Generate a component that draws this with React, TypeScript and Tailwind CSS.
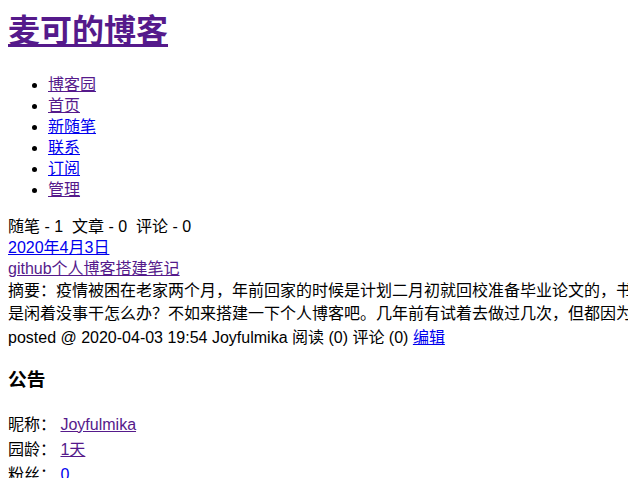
const visited = "text-[#551a8b] underline";
const link = "text-[#0000ee] underline";

const navItems = [
  { label: "博客园", seen: true },
  { label: "首页", seen: true },
  { label: "新随笔", seen: false },
  { label: "联系", seen: false },
  { label: "订阅", seen: false },
  { label: "管理", seen: true },
];

export default function App() {
  return (
    <div className="h-screen w-full overflow-hidden bg-white px-2 text-[16px] text-black font-['Liberation_Sans','Noto_Sans_CJK_SC',sans-serif]">
      <h1 className="mt-3 text-[32px] font-bold leading-[38px]">
        <a href="#" className={visited}>
          麦可的博客
        </a>
      </h1>

      <ul className="mt-6 list-disc pl-10 leading-[21px]">
        {navItems.map((item) => (
          <li key={item.label}>
            <a href="#" className={item.seen ? visited : link}>
              {item.label}
            </a>
          </li>
        ))}
      </ul>

      <div className="mt-4 leading-[21px]">
        <div>随笔 - 1&nbsp; 文章 - 0&nbsp; 评论 - 0</div>
        <div>
          <a href="#" className={link}>
            2020年4月3日
          </a>
        </div>
        <div>
          <a href="#" className={visited}>
            github个人博客搭建笔记
          </a>
        </div>
      </div>

      <div className="whitespace-nowrap leading-[23px]">
        摘要：疫情被困在老家两个月，年前回家的时候是计划二月初就回校准备毕业论文的，书和电脑都没带回来，于是每天都不知道干什么。那么问题来了，
        <br />
        是闲着没事干怎么办？不如来搭建一下个人博客吧。几年前有试着去做过几次，但都因为各种原因半途而废了，这次下定决心要搞定它。
      </div>

      <div className="leading-[25px]">
        posted @ 2020-04-03 19:54 Joyfulmika 阅读 (0) 评论 (0){" "}
        <a href="#" className={link}>
          编辑
        </a>
      </div>

      <h3 className="mt-[18px] text-[18.72px] font-bold leading-[24px]">公告</h3>

      <div className="mt-5 leading-[25px]">
        <div>
          昵称：{" "}
          <a href="#" className={visited}>
            Joyfulmika
          </a>
        </div>
        <div>
          园龄：{" "}
          <a href="#" className={visited}>
            1天
          </a>
        </div>
        <div>
          粉丝：{" "}
          <a href="#" className={link}>
            0
          </a>
        </div>
      </div>
    </div>
  );
}
